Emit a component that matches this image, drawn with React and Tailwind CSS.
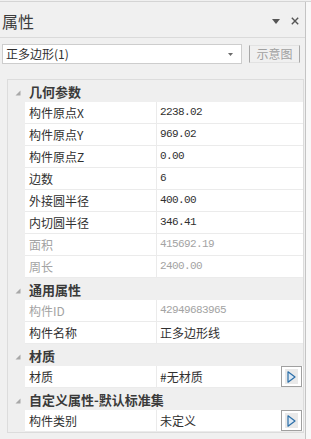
import React from 'react';

const groups = [
  {
    title: '几何参数',
    rows: [
      { name: '构件原点X', value: '2238.02' },
      { name: '构件原点Y', value: '969.02' },
      { name: '构件原点Z', value: '0.00' },
      { name: '边数', value: '6' },
      { name: '外接圆半径', value: '400.00' },
      { name: '内切圆半径', value: '346.41' },
      { name: '面积', value: '415692.19', disabled: true },
      { name: '周长', value: '2400.00', disabled: true },
    ],
  },
  {
    title: '通用属性',
    rows: [
      { name: '构件ID', value: '42949683965', disabled: true },
      { name: '构件名称', value: '正多边形线' },
    ],
  },
  {
    title: '材质',
    rows: [{ name: '材质', value: '#无材质', button: true }],
  },
  {
    title: '自定义属性-默认标准集',
    rows: [{ name: '构件类别', value: '未定义', button: true }],
  },
];

const isNum = (v) => /^[\d.]+$/.test(v);

function Expander() {
  return (
    <svg width="6" height="6" viewBox="0 0 6 6" className="mt-[3px]">
      <polygon points="5.5,0.5 5.5,5.5 0.5,5.5" fill="#a8a8a8" />
    </svg>
  );
}

function PickButton() {
  return (
    <div className="w-[21px] h-[21px] border border-[#a0a0a0] bg-white flex items-center justify-center shrink-0">
      <div className="w-[13px] h-[15px] bg-[#e9e9e9] flex items-center justify-center">
        <svg width="9" height="12" viewBox="0 0 9 12">
          <polygon points="1,0.8 8,6 1,11.2" fill="#dbe8f4" stroke="#2b6ea8" strokeWidth="1.2" strokeLinejoin="round" />
        </svg>
      </div>
    </div>
  );
}

function Category({ title }) {
  return (
    <div className="flex h-[22px] bg-[#efefef]">
      <div className="w-[17px] flex items-center justify-end pr-[4px]">
        <Expander />
      </div>
      <div className="pl-[4px] flex items-center text-[13px] font-bold text-[#3a3a3a]">{title}</div>
    </div>
  );
}

function Row({ name, value, disabled, button }) {
  const color = disabled ? 'text-[#a3a3a3]' : 'text-[#303030]';
  return (
    <div className="flex h-[22px]">
      <div className="w-[17px] bg-[#efefef]" />
      <div className="flex-1 flex bg-white border-b border-[#ebebeb]">
        <div className={`w-[132px] border-r border-[#ebebeb] pl-[4px] flex items-center text-[12px] ${color}`}>
          {name}
        </div>
        <div className={`flex-1 flex items-center justify-between pl-[3px] pr-px ${color}`}>
          {isNum(value) ? (
            <span className="font-['Liberation_Mono',monospace] text-[11px] tracking-[-0.6px]">{value}</span>
          ) : (
            <span className="text-[12px]">{value}</span>
          )}
          {button && <PickButton />}
        </div>
      </div>
    </div>
  );
}

export default function App() {
  return (
    <div className="w-[311px] h-[439px] overflow-hidden bg-[#f0f0f0] font-['Noto_Sans_CJK_SC','Noto_Sans',sans-serif] leading-none">
      <div className="h-px" />
      <div className="h-px bg-[#d4d4d4]" />
      <div className="flex h-[437px]">
        <div className="w-[306px] border-r border-[#c4c4c4] flex flex-col">
          {/* header */}
          <div className="h-[36px] flex items-center justify-between pl-[2px] pr-[6px] pt-[3px] border-b border-[#dadada]">
            <span className="text-[16px] text-[#3c3c3c]">属性</span>
            <div className="flex items-center gap-[11px]">
              <svg width="8" height="5" viewBox="0 0 8 5">
                <polygon points="0,0 8,0 4,5" fill="#555" />
              </svg>
              <svg width="8" height="8" viewBox="0 0 8 8">
                <path d="M0.8 0.8 L7.2 7.2 M7.2 0.8 L0.8 7.2" stroke="#555" strokeWidth="1.4" />
              </svg>
            </div>
          </div>

          {/* selector row */}
          <div className="flex items-start mt-[6px]">
            <div className="ml-[2px] w-[240px] h-[20px] bg-white border border-[#cdcdcd] flex items-center justify-between pl-[3px] pr-[8px]">
              <span className="text-[12px] text-[#303030]">正多边形(1)</span>
              <svg width="5" height="3" viewBox="0 0 5 3">
                <polygon points="0,0 5,0 2.5,3" fill="#6a6a6a" />
              </svg>
            </div>
            <div className="ml-[7px] mt-[1px] w-[51px] h-[18px] border-x border-[#a8a8a8] border-y border-y-[#e2e2e2] flex items-center justify-center">
              <span className="text-[12px] text-[#a0a0a0]">示意图</span>
            </div>
          </div>

          {/* property grid */}
          <div className="ml-[7px] mt-[15px] w-[297px] border border-[#dcdcdc]">
            {groups.map((g) => (
              <div key={g.title}>
                <Category title={g.title} />
                {g.rows.map((r) => (
                  <Row key={r.name} {...r} />
                ))}
              </div>
            ))}
          </div>
        </div>
        <div className="flex-1 bg-[#f8f8f8]" />
      </div>
    </div>
  );
}
